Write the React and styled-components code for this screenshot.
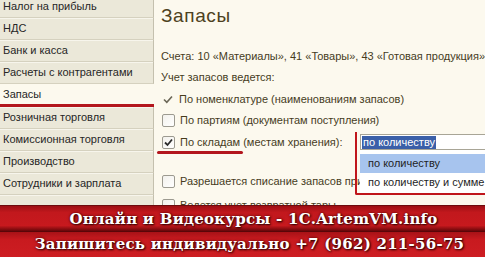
import React from 'react'
import styled, { createGlobalStyle } from 'styled-components';

const GlobalStyle = createGlobalStyle`
  html, body {
    margin: 0;
    padding: 0;
    width: 485px;
    height: 257px;
    overflow: hidden;
    background: #fcf9ee;
    font-family: "Liberation Sans", Arial, sans-serif;
  }
`;

const Page = styled.div`
  width: 485px;
  height: 257px;
  display: flex;
  flex-direction: column;
  overflow: hidden;
`;

const Workspace = styled.div`
  display: flex;
  height: 206px;
  overflow: hidden;
`;

const Sidebar = styled.div`
  width: 154px;
  flex-shrink: 0;
  background: #ebe8d9;
  display: flex;
  flex-direction: column;
  margin-top: -4px;
`;

const NavItem = styled.div`
  height: ${p => (p.$active ? '20px' : '21px')};
  line-height: 21px;
  padding-left: 3px;
  font-size: 11px;
  color: #262626;
  white-space: nowrap;
  background: ${p => (p.$active ? '#fcf9ee' : '#ebe8d9')};
  border-bottom: ${p => (p.$active ? '3px solid #b3161d' : '1px solid #d5d1bf')};
  border-right: ${p => (p.$active ? 'none' : '1px solid #c4c0ae')};
  box-shadow: ${p => (p.$active ? 'none' : 'inset 0 1px 0 #f7f5ec')};
  flex-shrink: 0;
`;

const Filler = styled.div`
  flex: 1;
  border-right: 1px solid #c4c0ae;
  box-shadow: inset 0 1px 0 #f7f5ec;
`;

const Main = styled.div`
  flex: 1;
  position: relative;
  overflow: hidden;
  padding-left: 7px;
  color: #463c1d;
  font-size: 11px;
`;

const Title = styled.div`
  margin-top: 4px;
  height: 24px;
  line-height: 24px;
  font-size: 19px;
  letter-spacing: 0.6px;
  color: #4d4120;
`;

const Line = styled.div`
  height: ${p => p.$h || 21}px;
  line-height: ${p => p.$h || 21}px;
  margin-top: ${p => p.$mt || 0}px;
  white-space: nowrap;
  display: flex;
  align-items: center;
  position: relative;
  z-index: ${p => (p.$top ? 2 : 'auto')};
`;

const LabelCell = styled.div`
  display: flex;
  align-items: center;
  gap: 5px;
  width: ${p => (p.$w ? `${p.$w}px` : 'auto')};
  flex-shrink: 0;
  position: relative;
`;

const Box = styled.span`
  width: 11px;
  height: 11px;
  margin-left: 1px;
  border: 1px solid #9c9a90;
  border-radius: 2px;
  background: linear-gradient(135deg, #f2f1ec, #ffffff);
  display: flex;
  align-items: center;
  justify-content: center;
  flex-shrink: 0;
`;

const Mark = styled.span`
  width: 12px;
  margin-left: 1px;
  display: flex;
  align-items: center;
  justify-content: center;
  flex-shrink: 0;
`;

const Underline = styled.span`
  position: absolute;
  left: -4px;
  top: 20px;
  width: 86px;
  height: 3px;
  border-radius: 2px;
  background: #b3161d;
`;

const Combo = styled.div`
  position: relative;
  flex: 1;
  min-width: 140px;
  height: 14px;
  border: 1px solid #a8a596;
  background: #ffffff;
  display: flex;
  align-items: center;
  padding-left: 1px;
  line-height: 13px;
`;

const Selected = styled.span`
  background: #3a5fa8;
  color: #ffffff;
  padding: 0 1px;
`;

const Bracket = styled.div`
  position: absolute;
  left: -6px;
  top: -3px;
  right: -20px;
  height: 61px;
  border-left: 2px solid #c0161c;
  border-bottom: 2px solid #c0161c;
  border-bottom-left-radius: 2px;
  pointer-events: none;
`;

const DropList = styled.div`
  position: absolute;
  left: -1px;
  top: 15px;
  right: -20px;
  padding-top: 4px;
  height: 39px;
  background: #ffffff;
  display: flex;
  flex-direction: column;
`;

const Option = styled.div`
  height: 19px;
  line-height: 19px;
  padding-left: 8px;
  color: #1f1f1f;
  background: ${p => (p.$hl ? '#a7c4ee' : '#ffffff')};
`;

const Banner = styled.div`
  height: 51px;
  display: flex;
  flex-direction: column;
  font-family: "DejaVu Serif", "Liberation Serif", serif;
  font-weight: bold;
  color: #ffffff;
  letter-spacing: 0.25px;
  text-shadow: 1px 1px 2px #2a0000, 0 0 3px #4a0000;
  border-top: 1px solid #6d0b0e;
`;

const Stripe = styled.div`
  flex: 1;
  display: flex;
  align-items: center;
  justify-content: center;
  font-size: ${p => p.$size}px;
  padding-left: ${p => p.$shift || 0}px;
  white-space: nowrap;
  background: ${p => p.$bg};
`;

const nav = [
  'Налог на прибыль',
  'НДС',
  'Банк и касса',
  'Расчеты с контрагентами',
  'Запасы',
  'Розничная торговля',
  'Комиссионная торговля',
  'Производство',
  'Сотрудники и зарплата',
];

const Tick = () => (
  <svg width="11" height="11" viewBox="0 0 11 11">
    <path d="M2 5.5 L4.5 8 L9 2.5" fill="none" stroke="#2b2b2b" strokeWidth="1.8" />
  </svg>
);

const CheckBox = ({ checked }) => <Box>{checked && <Tick />}</Box>;

function App() {
  return (
    <Page>
      <GlobalStyle />
      <Workspace>
        <Sidebar>
          {nav.map(n => (
            <NavItem key={n} $active={n === 'Запасы'}>{n}</NavItem>
          ))}
          <Filler />
        </Sidebar>
        <Main>
          <Title>Запасы</Title>
          <Line $mt={18}>Счета: 10 «Материалы», 41 «Товары», 43 «Готовая продукция» и др.</Line>
          <Line>Учет запасов ведется:</Line>
          <Line $h={22}>
            <LabelCell>
              <Mark>
                <svg width="10" height="9" viewBox="0 0 10 9">
                  <path d="M1 4.5 L3.8 7.3 L9 1.5" fill="none" stroke="#6b6757" strokeWidth="1.6" />
                </svg>
              </Mark>
              По номенклатуре (наименованиям запасов)
            </LabelCell>
          </Line>
          <Line>
            <LabelCell>
              <CheckBox />
              По партиям (документам поступления)
            </LabelCell>
          </Line>
          <Line $h={22} $top>
            <LabelCell $w={199}>
              <CheckBox checked />
              По складам (местам хранения):
              <Underline />
            </LabelCell>
            <Combo>
              <Selected>по количеству</Selected>
              <DropList>
                <Option $hl>по количеству</Option>
                <Option>по количеству и сумме</Option>
              </DropList>
              <Bracket />
            </Combo>
          </Line>
          <Line $mt={18}>
            <LabelCell>
              <CheckBox />
              Разрешается списание запасов при отсутствии остатков
            </LabelCell>
          </Line>
          <Line $mt={3}>
            <LabelCell>
              <CheckBox />
              Ведется учет возвратной тары
            </LabelCell>
          </Line>
        </Main>
      </Workspace>
      <Banner>
        <Stripe
          $size={15}
          $shift={22}
          $bg="linear-gradient(180deg, #9e0f14 0%, #c2181d 25%, #c7191e 75%, #7a0a0d 92%, #4f0507 100%)"
        >
          Онлайн и Видеокурсы - 1C.ArtemVM.info
        </Stripe>
        <Stripe
          $size={15}
          $shift={14}
          $bg="linear-gradient(180deg, #a71217 0%, #c81a1f 30%, #cd1d22 100%)"
        >
          Запишитесь индивидуально +7 (962) 211-56-75
        </Stripe>
      </Banner>
    </Page>
  );
}

export default App;
